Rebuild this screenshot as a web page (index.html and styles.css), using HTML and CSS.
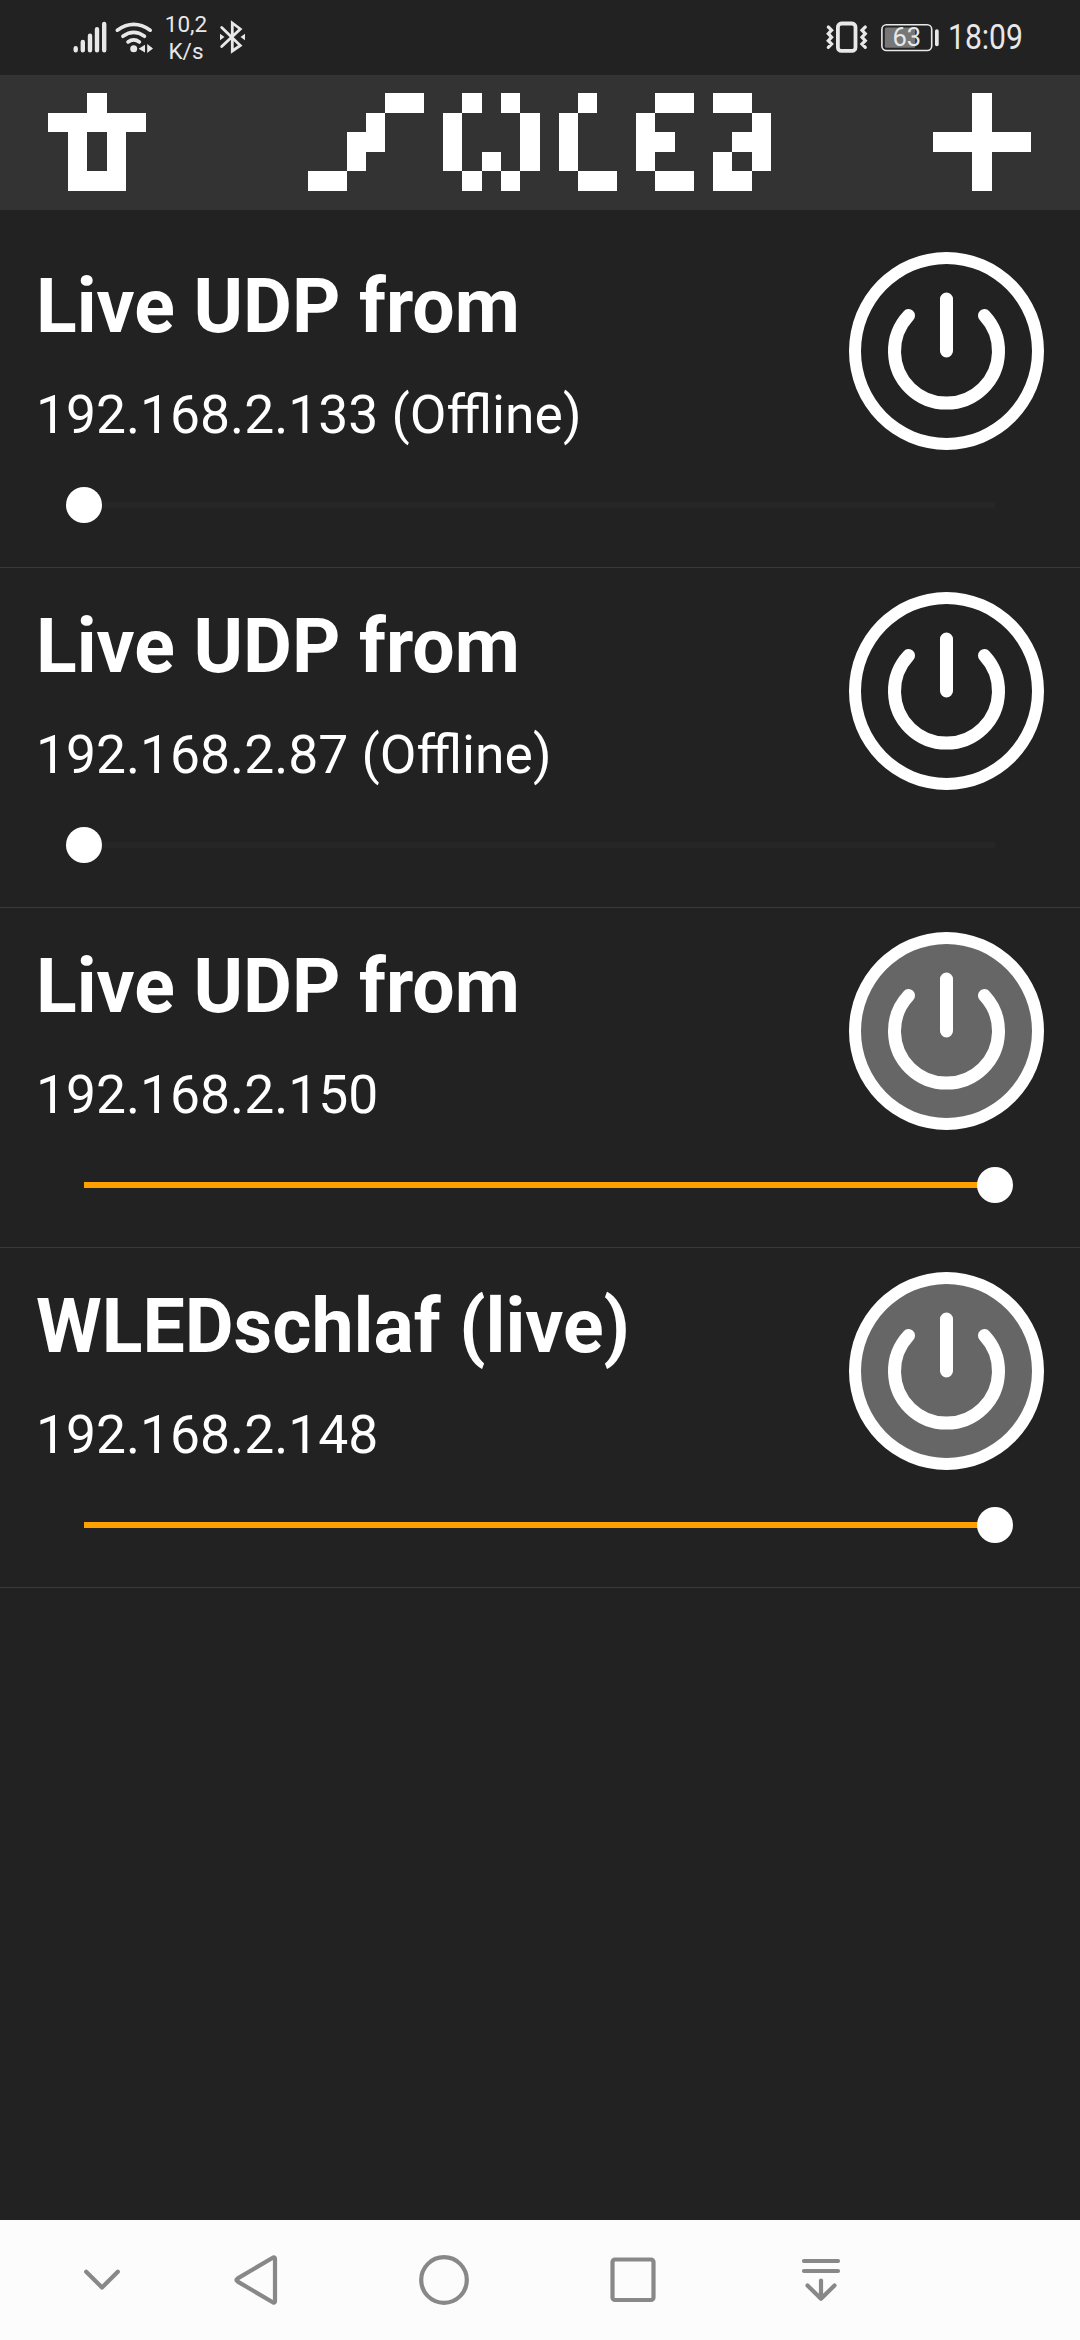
FILE: index.html
```html
<!DOCTYPE html>
<html lang="en">
<head>
<meta charset="utf-8">
<title>WLED</title>
<link rel="stylesheet" href="styles.css">
</head>
<body>
<svg class="defs" aria-hidden="true">
  <symbol id="power" viewBox="0 0 195 198">
    <path class="power-glyph" d="M97.5 47V99M59.5 63.6A52 52 0 1 0 135.500 63.600"/>
  </symbol>
</svg>
<div class="screen">
  <div class="status">
    <svg class="status-signal" width="96" height="75" viewBox="66 0 96 75">
      <path class="bars" d="M75.700 48.300V50.200M82.800 41.900V50.200M90 35.700V50.200M97 29.200V50.200M104.200 23.900V50.200"/>
      <path class="arcs" d="M117.300 30.200Q133.700 18.600 150.200 30.200M122.900 36.300Q133.700 28.600 144.500 36.300M128 42Q133.700 37.800 139.400 42"/>
      <circle cx="133.700" cy="48.700" r="3.500"/>
      <path d="M138.600 48.700L145 44.700V52.600ZM147.200 44L153 48.500L147.200 53Z"/>
    </svg>
    <div class="speed"><span>10,2</span><span>K/s</span></div>
    <svg class="status-bt" width="30" height="75" viewBox="217 0 30 75">
      <path class="bt" d="M221.700 27.500L240.300 45.500L232.300 51V23L240.300 29L221.700 46.500"/>
      <path d="M220 33.800L224.500 37L220 40.200ZM245 33.800L240.500 37L245 40.200Z"/>
    </svg>
    <svg class="status-right" width="120" height="75" viewBox="822 0 120 75">
      <rect class="phone" x="837.900" y="23.500" width="17.600" height="27.400" rx="3.500"/>
      <path class="zig" d="M828.300 27L831.600 30.200L828.300 33.700L831.600 37.200L828.300 40.700L831.600 44L828.300 47.300M865.300 27L862 30.200L865.300 33.700L862 37.200L865.300 40.700L862 44L865.300 47.300"/>
      <rect class="cell" x="881.900" y="24.700" width="49.800" height="25.800" rx="4.500"/>
      <rect class="level" x="884.800" y="27.500" width="30.500" height="20.300" rx="1.500"/>
      <rect x="935" y="29.200" width="3.700" height="17" rx="1.800"/>
      <text x="906.800" y="46" text-anchor="middle" class="pct">63</text>
    </svg>
    <span class="clock">18:09</span>
  </div>

  <header class="header">
    <svg width="98" height="98" viewBox="0 0 5 5" preserveAspectRatio="none">
      <rect x="2" width="1" height="1"/><rect y="1" width="5" height="1"/><rect x="1" y="2" width="1" height="3"/><rect x="3" y="2" width="1" height="3"/><rect x="2" y="4" width="1" height="1"/>
    </svg>
    <svg width="463" height="98" viewBox="0 0 24 5" preserveAspectRatio="none" role="img" aria-label="WLED">
      <rect x="4" width="2" height="1"/><rect x="3" y="1" width="1" height="2"/><rect x="2" y="2" width="1" height="2"/><rect y="4" width="2" height="1"/>
      <rect x="8" width="1" height="1"/><rect x="10" width="1" height="1"/><rect x="7" y="1" width="1" height="3"/><rect x="11" y="1" width="1" height="3"/><rect x="9" y="3" width="1" height="1"/><rect x="8" y="4" width="1" height="1"/><rect x="10" y="4" width="1" height="1"/>
      <rect x="14" width="1" height="1"/><rect x="13" y="1" width="1" height="3"/><rect x="14" y="4" width="2" height="1"/>
      <rect x="18" width="2" height="1"/><rect x="17" y="1" width="1" height="3"/><rect x="18" y="2" width="1" height="1"/><rect x="18" y="4" width="2" height="1"/>
      <rect x="21" width="2" height="1"/><rect x="23" y="1" width="1" height="3"/><rect x="22" y="2" width="1" height="1"/><rect x="21" y="3" width="1" height="2"/><rect x="22" y="4" width="1" height="1"/>
    </svg>
    <svg width="98" height="98" viewBox="0 0 5 5" preserveAspectRatio="none">
      <rect x="2" width="1" height="5"/><rect y="2" width="5" height="1"/>
    </svg>
  </header>

  <main class="list">
    <section class="device">
      <div class="info"><h2 class="name">Live UDP from</h2><p class="ip">192.168.2.133 (Offline)</p></div>
      <div class="power"><svg><use href="#power"/></svg></div>
      <div class="slider"><div class="track"></div><div class="thumb"></div></div>
    </section>
    <section class="device">
      <div class="info"><h2 class="name">Live UDP from</h2><p class="ip">192.168.2.87 (Offline)</p></div>
      <div class="power"><svg><use href="#power"/></svg></div>
      <div class="slider"><div class="track"></div><div class="thumb"></div></div>
    </section>
    <section class="device on">
      <div class="info"><h2 class="name">Live UDP from</h2><p class="ip">192.168.2.150</p></div>
      <div class="power"><svg><use href="#power"/></svg></div>
      <div class="slider"><div class="track"></div><div class="thumb"></div></div>
    </section>
    <section class="device on">
      <div class="info"><h2 class="name">WLEDschlaf (live)</h2><p class="ip">192.168.2.148</p></div>
      <div class="power"><svg><use href="#power"/></svg></div>
      <div class="slider"><div class="track"></div><div class="thumb"></div></div>
    </section>
  </main>

  <nav class="nav">
    <svg viewBox="0 0 60 60"><path d="M14.200 21.700L30 37.500L45.800 21.700"/></svg>
    <svg viewBox="0 0 60 60"><path d="M11.700 28.400Q9.200 30 11.700 31.600L47.200 52.500Q49 53.200 49 51V9Q49 6.800 47.200 7.500Z"/></svg>
    <svg viewBox="0 0 60 60"><circle cx="30" cy="30" r="22.800"/></svg>
    <svg viewBox="0 0 60 60"><rect x="9.500" y="9.500" width="41" height="40.500" rx="2.500"/></svg>
    <svg viewBox="0 0 60 60"><path d="M13 11H47M13 21H47M30 30.500V48.500M16.500 35.500L30 48.800L43.500 35.500"/></svg>
  </nav>
</div>
</body>
</html>
```

FILE: styles.css
```css
body {
  margin: 0;
  font-family: Roboto, sans-serif;
  color: #fff;
  background: #222;
}

.defs {
  position: absolute;
  width: 0;
  height: 0;
}

.screen {
  display: flex;
  flex-direction: column;
  width: 1080px;
  height: 2340px;
}

/* Status bar */
.status {
  display: flex;
  align-items: center;
  height: 75px;
  padding-left: 66px;
  color: #e8e8e8;
  fill: #e8e8e8;
}

.status svg {
  display: block;
  flex: none;
}

.bars,
.arcs,
.bt,
.phone,
.zig,
.cell {
  fill: none;
  stroke: #e8e8e8;
  stroke-linecap: round;
}

.bars { stroke-width: 4.4; }
.arcs { stroke-width: 3.6; }
.bt { stroke-width: 2.8; }
.phone { stroke-width: 3.8; }
.zig { stroke-width: 3.2; }
.cell { stroke-width: 1.6; }
.level { fill: #777; }
.pct { font-size: 25.5px; }

.speed {
  display: flex;
  flex-direction: column;
  width: 48px;
  margin-right: 7px;
  font-size: 22.5px;
  line-height: 27px;
  text-align: center;
}

.status-right { margin-left: 575px; }

.clock {
  width: 88px;
  margin-left: 6px;
  font-size: 35px;
  line-height: 75px;
  transform: scaleX(0.86);
  transform-origin: left center;
}

/* Header */
.header {
  display: flex;
  justify-content: space-between;
  box-sizing: border-box;
  height: 135px;
  padding: 18px 49px 0 48px;
  background: #333;
  fill: #fff;
  shape-rendering: crispEdges;
}

/* Devices */
.list {
  flex: 1;
  padding-top: 18px;
}

.device {
  display: grid;
  grid-template-columns: 1fr 195px;
  grid-template-rows: 235px 36px;
  box-sizing: border-box;
  height: 340px;
  padding: 24px 36px 0;
  border-bottom: 1px solid #393939;
}

.name,
.ip {
  margin: 0;
  line-height: 109px;
  white-space: nowrap;
}

.name {
  font-size: 75.2px;
  font-weight: 700;
}

.ip {
  font-size: 53.4px;
  line-height: 108px;
}

.power {
  box-sizing: border-box;
  width: 195px;
  height: 198px;
  border: 12px solid #fff;
  border-radius: 50%;
}

.power svg {
  display: block;
  width: 195px;
  height: 198px;
  margin: -12px;
}

.power-glyph {
  fill: none;
  stroke: #fff;
  stroke-width: 13;
  stroke-linecap: round;
}

.on .power { background: #666; }

.slider {
  display: flex;
  grid-column: 1 / -1;
  align-items: center;
  margin: 0 31px 0 30px;
}

.track {
  flex: 1;
  height: 6px;
  margin: 0 18px;
  background: #262626;
}

.thumb {
  order: -1;
  width: 36px;
  height: 36px;
  margin-right: -36px;
  border-radius: 50%;
  background: #fff;
  z-index: 1;
}

.on .track { background: #ffa000; }

.on .thumb {
  order: 1;
  margin: 0 0 0 -36px;
}

/* Navigation */
.nav {
  display: grid;
  grid-template-columns: 120px repeat(4, 188.300px);
  align-items: center;
  justify-items: center;
  box-sizing: border-box;
  height: 120px;
  padding-left: 42px;
  background: #fcfcfc;
}

.nav svg {
  width: 60px;
  height: 60px;
  fill: none;
  stroke: #888;
  stroke-width: 4.2;
  stroke-linecap: round;
  stroke-linejoin: round;
}
```
